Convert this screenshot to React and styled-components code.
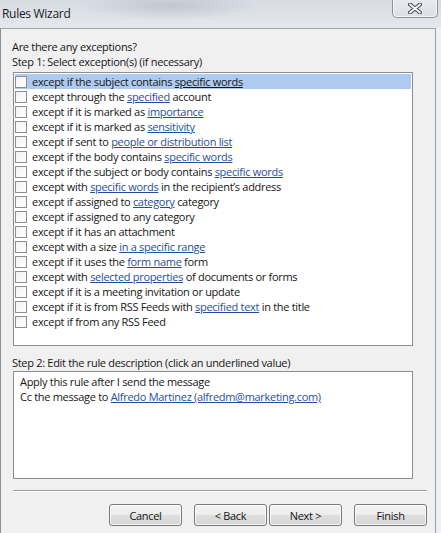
import React, { useState } from 'react';
import styled, { createGlobalStyle } from 'styled-components';

const exceptions = [
  ['except if the subject contains ', 'specific words', ''],
  ['except through the ', 'specified', ' account'],
  ['except if it is marked as ', 'importance', ''],
  ['except if it is marked as ', 'sensitivity', ''],
  ['except if sent to ', 'people or distribution list', ''],
  ['except if the body contains ', 'specific words', ''],
  ['except if the subject or body contains ', 'specific words', ''],
  ['except with ', 'specific words', ' in the recipient\u2019s address'],
  ['except if assigned to ', 'category', ' category'],
  ['except if assigned to any category', '', ''],
  ['except if it has an attachment', '', ''],
  ['except with a size ', 'in a specific range', ''],
  ['except if it uses the ', 'form name', ' form'],
  ['except with ', 'selected properties', ' of documents or forms'],
  ['except if it is a meeting invitation or update', '', ''],
  ['except if it is from RSS Feeds with ', 'specified text', ' in the title'],
  ['except if from any RSS Feed', '', ''],
];

const App = () => {
  const [selected, setSelected] = useState(0);

  return (
    <>
      <GlobalStyle />
      <Window>
        <TitleBar>
          <Title>Rules Wizard</Title>
          <CloseButton>
            <svg width="14" height="11" viewBox="0 0 14 11">
              <path d="M2 1.5 L12 9.5 M12 1.5 L2 9.5" stroke="#4a4f57" strokeWidth="4" strokeLinecap="round" />
              <path d="M2 1.5 L12 9.5 M12 1.5 L2 9.5" stroke="#f4f6f8" strokeWidth="2" strokeLinecap="round" />
            </svg>
          </CloseButton>
        </TitleBar>
        <Client>
          <Label>Are there any exceptions?</Label>
          <Label>Step 1: Select exception(s) (if necessary)</Label>
          <ListBox>
            {exceptions.map(([before, link, after], i) => (
              <Row key={i} $active={selected === i} onClick={() => setSelected(i)}>
                <Check />
                <span>
                  {before}
                  {link && <Link $plain={selected === i}>{link}</Link>}
                  {after}
                </span>
              </Row>
            ))}
          </ListBox>
          <StepLabel>Step 2: Edit the rule description (click an underlined value)</StepLabel>
          <DescBox>
            <div>Apply this rule after I send the message</div>
            <div>
              Cc the message to <Link>Alfredo Martinez (alfredm@marketing.com)</Link>
            </div>
          </DescBox>
          <Separator />
          <ButtonRow>
            <Button>Cancel</Button>
            <ButtonPair>
              <Button>&lt; Back</Button>
              <Button>Next &gt;</Button>
            </ButtonPair>
            <Button>Finish</Button>
          </ButtonRow>
        </Client>
      </Window>
    </>
  );
};

const GlobalStyle = createGlobalStyle`
  body {
    margin: 0;
    background: #eceef1;
  }
`;

const Window = styled.div`
  width: 441px;
  height: 533px;
  display: flex;
  flex-direction: column;
  background: linear-gradient(90deg, #e4e6ea 0%, #eef0f2 100%);
  font-family: 'Open Sans', 'Noto Sans', sans-serif;
  font-size: 11px;
  letter-spacing: -0.3px;
  color: #161616;
  overflow: hidden;
`;

const TitleBar = styled.div`
  height: 28px;
  display: flex;
  justify-content: space-between;
  align-items: flex-start;
  background:
    radial-gradient(ellipse 90px 14px at 170px 6px, rgba(150, 156, 168, 0.35), transparent),
    linear-gradient(180deg, #d7dbe2 0%, #dfe2e8 60%, #e6e8ec 100%);
`;

const Title = styled.div`
  padding: 6px 0 0 2px;
  font-size: 12px;
  line-height: 16px;
  color: #1c1c1c;
`;

const CloseButton = styled.div`
  width: 44px;
  height: 18px;
  margin: -1px 3px 0 0;
  display: flex;
  align-items: center;
  justify-content: center;
  border: 1px solid #8c9099;
  border-top: none;
  border-radius: 0 0 5px 5px;
  background: linear-gradient(180deg, #e9ebef 0%, #dcdfe5 100%);
  box-shadow: inset 0 0 0 1px rgba(255, 255, 255, 0.7);
`;

const Client = styled.div`
  flex: 1;
  margin-right: 5px;
  padding: 10px 8px 0 11px;
  background: #f0f0f0;
  border-top: 1px solid #a3a6ab;
  border-left: 1px solid #8d9096;
  border-right: 1px solid #9a9da2;
  display: flex;
  flex-direction: column;
`;

const Label = styled.div`
  line-height: 15px;
`;

const StepLabel = styled(Label)`
  margin-top: 9px;
`;

const ListBox = styled.div`
  width: 400px;
  height: 274px;
  box-sizing: border-box;
  margin: 3px 0 0 1px;
  padding: 1px;
  background: #fff;
  border: 1px solid #8a8d92;
`;

const Row = styled.div`
  height: 15px;
  display: flex;
  align-items: center;
  gap: 5px;
  white-space: nowrap;
  line-height: 15px;
  background: ${(p) => (p.$active ? '#aecbef' : 'transparent')};
  cursor: default;
`;

const Check = styled.span`
  width: 12px;
  height: 12px;
  box-sizing: border-box;
  flex: none;
  border: 1px solid #8b8e92;
  background: linear-gradient(135deg, #f2f2f2 0%, #ffffff 100%);
`;

const Link = styled.span`
  color: ${(p) => (p.$plain ? '#161616' : '#1f4f9c')};
  text-decoration: underline;
  text-underline-offset: 1px;
`;

const DescBox = styled.div`
  width: 400px;
  height: 108px;
  box-sizing: border-box;
  margin: 1px 0 0 1px;
  padding: 2px 6px;
  background: #fff;
  border: 1px solid #8a8d92;
  line-height: 15px;
`;

const Separator = styled.div`
  margin: 11px 0 0 1px;
  height: 1px;
  background: #a0a0a0;
  border-bottom: 1px solid #ffffff;
`;

const ButtonRow = styled.div`
  margin-top: 12px;
  display: flex;
  justify-content: flex-end;
  gap: 12px;
`;

const ButtonPair = styled.div`
  display: flex;
  gap: 2px;
`;

const Button = styled.button`
  width: 73px;
  height: 22px;
  padding: 0;
  font-family: inherit;
  font-size: 11px;
  letter-spacing: inherit;
  color: #161616;
  border: 1px solid #777a7e;
  border-radius: 3px;
  background: linear-gradient(180deg, #f4f4f4 0%, #ececec 48%, #dedede 52%, #d6d6d6 100%);
  box-shadow: inset 0 0 0 1px rgba(255, 255, 255, 0.75);
`;

export default App;
